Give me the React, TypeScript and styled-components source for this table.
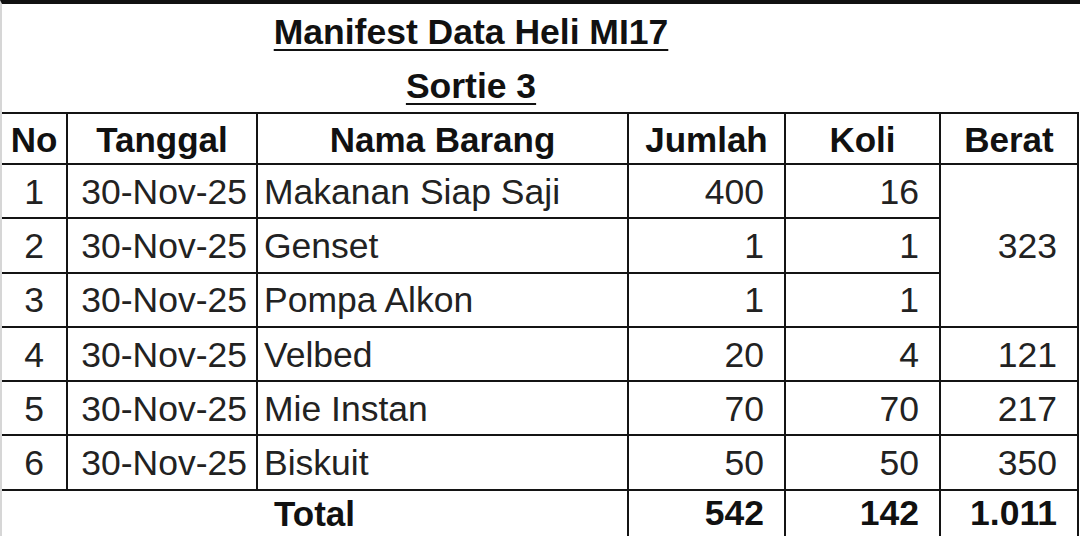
import React from "react";
import styled, { createGlobalStyle } from "styled-components";

const GlobalStyle = createGlobalStyle`
  html, body {
    margin: 0;
    padding: 0;
    background: #ffffff;
    overflow: hidden;
  }
`;

const Sheet = styled.div`
  width: 1080px;
  height: 536px;
  overflow: hidden;
  box-sizing: border-box;
  border-top: 4px solid #111;
  border-left: 2px solid #d6d6d6;
  font-family: "Liberation Sans", Arial, sans-serif;
  color: #1e1e1e;
`;

const TitleBlock = styled.div`
  display: flex;
  flex-direction: column;
  width: 938px;
`;

const TitleLine = styled.div`
  height: 54px;
  display: flex;
  align-items: center;
  justify-content: center;
  font-size: 35.5px;
  font-weight: 700;
  color: #111;
  text-decoration: underline;
  text-decoration-thickness: 2px;
  text-underline-offset: 5px;
  padding-top: 3px;
  box-sizing: border-box;
`;

const Grid = styled.table`
  border-collapse: collapse;
  table-layout: fixed;
  width: 1076px;
`;

const Row = styled.tr<{ $h: number }>`
  height: ${({ $h }) => $h}px;
`;

const HeadCell = styled.th<{ $first?: boolean }>`
  border: 2px solid #141414;
  border-left: ${({ $first }) => ($first ? "0" : "2px solid #141414")};
  font-size: 35px;
  font-weight: 700;
  color: #111;
  text-align: center;
  padding: 2px 0 0;
  line-height: 1;
  white-space: nowrap;
  overflow: hidden;
`;

type Align = "left" | "center" | "right";

const Cell = styled.td<{ $align: Align; $first?: boolean; $bold?: boolean }>`
  border: 2px solid #141414;
  border-left: ${({ $first }) => ($first ? "0" : "2px solid #141414")};
  font-size: 35.5px;
  font-weight: ${({ $bold }) => ($bold ? 700 : 400)};
  color: ${({ $bold }) => ($bold ? "#111" : "#222")};
  text-align: ${({ $align }) => $align};
  padding: 3px ${({ $align }) => ($align === "right" ? "20px" : "0")} 0
    ${({ $align }) => ($align === "left" ? "6px" : "0")};
  white-space: nowrap;
  overflow: hidden;
  vertical-align: middle;
  line-height: 1;
`;

const DateCell = styled(Cell)`
  padding-right: 9px;
`;

const TotalCell = styled(Cell)`
  border-bottom: 0;
  padding-top: 1px;
`;

const TotalLabel = styled.td`
  border-top: 2px solid #141414;
  font-size: 35px;
  font-weight: 700;
  color: #111;
  text-align: center;
  padding-top: 1px;
  line-height: 1;
  vertical-align: middle;
`;

type Item = {
  no: number;
  tanggal: string;
  nama: string;
  jumlah: number;
  koli: number;
};

const items: Item[] = [
  { no: 1, tanggal: "30-Nov-25", nama: "Makanan Siap Saji", jumlah: 400, koli: 16 },
  { no: 2, tanggal: "30-Nov-25", nama: "Genset", jumlah: 1, koli: 1 },
  { no: 3, tanggal: "30-Nov-25", nama: "Pompa Alkon", jumlah: 1, koli: 1 },
  { no: 4, tanggal: "30-Nov-25", nama: "Velbed", jumlah: 20, koli: 4 },
  { no: 5, tanggal: "30-Nov-25", nama: "Mie Instan", jumlah: 70, koli: 70 },
  { no: 6, tanggal: "30-Nov-25", nama: "Biskuit", jumlah: 50, koli: 50 },
];

// berat per row; rows 1-3 share one merged cell
const berat: Record<number, { value: string; span: number }> = {
  1: { value: "323", span: 3 },
  4: { value: "121", span: 1 },
  5: { value: "217", span: 1 },
  6: { value: "350", span: 1 },
};

const App: React.FC = () => {
  return (
    <>
      <GlobalStyle />
      <Sheet>
        <TitleBlock>
          <TitleLine>Manifest Data Heli MI17</TitleLine>
          <TitleLine>Sortie 3</TitleLine>
        </TitleBlock>
        <Grid>
          <colgroup>
            <col style={{ width: 65 }} />
            <col style={{ width: 190 }} />
            <col style={{ width: 371 }} />
            <col style={{ width: 157 }} />
            <col style={{ width: 155 }} />
            <col style={{ width: 138 }} />
          </colgroup>
          <thead>
            <Row $h={51}>
              <HeadCell $first>No</HeadCell>
              <HeadCell>Tanggal</HeadCell>
              <HeadCell>Nama Barang</HeadCell>
              <HeadCell>Jumlah</HeadCell>
              <HeadCell>Koli</HeadCell>
              <HeadCell>Berat</HeadCell>
            </Row>
          </thead>
          <tbody>
            {items.map((it) => (
              <Row $h={54.3} key={it.no}>
                <Cell $align="center" $first>
                  {it.no}
                </Cell>
                <DateCell $align="right">{it.tanggal}</DateCell>
                <Cell $align="left">{it.nama}</Cell>
                <Cell $align="right">{it.jumlah}</Cell>
                <Cell $align="right">{it.koli}</Cell>
                {berat[it.no] && (
                  <Cell $align="right" rowSpan={berat[it.no].span}>
                    {berat[it.no].value}
                  </Cell>
                )}
              </Row>
            ))}
            <Row $h={46}>
              <TotalLabel colSpan={3}>Total</TotalLabel>
              <TotalCell $align="right" $bold>
                542
              </TotalCell>
              <TotalCell $align="right" $bold>
                142
              </TotalCell>
              <TotalCell $align="right" $bold>
                1.011
              </TotalCell>
            </Row>
          </tbody>
        </Grid>
      </Sheet>
    </>
  );
};

export default App;
